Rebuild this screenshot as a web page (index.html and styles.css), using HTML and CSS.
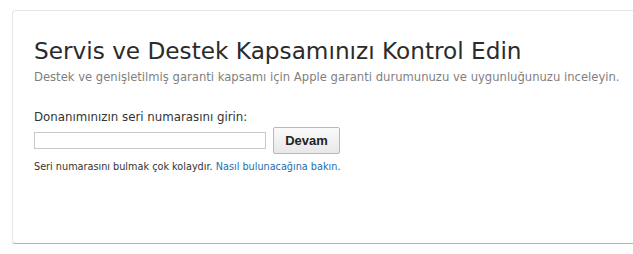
FILE: index.html
```html
<!DOCTYPE html>
<html>
<head>
    <link rel="stylesheet" href="styles.css">
</head>
<body>
    <div class="panel">
        <h1 class="title">Servis ve Destek Kapsamınızı Kontrol Edin</h1>
        <p class="subtitle">Destek ve genişletilmiş garanti kapsamı için Apple garanti durumunuzu ve uygunluğunuzu inceleyin.</p>

        <form class="serial-form" onsubmit="return false;">
            <label class="label" for="serial">Donanımınızın seri numarasını girin:</label>
            <div class="row">
                <input type="text" id="serial" class="field">
                <button type="submit" class="go">Devam</button>
            </div>
            <p class="hint">Seri numarasını bulmak çok kolaydır. <a href="#">Nasıl bulunacağına bakın.</a></p>
        </form>
    </div>
</body>
</html>
```

FILE: styles.css
```css
* {
    margin: 0;
    padding: 0;
    box-sizing: border-box;
}

body {
    background: #fff;
    font-family: "DejaVu Sans", "Lucida Grande", sans-serif;
    padding: 10px 0 0 12px;
    overflow: hidden;
}

.panel {
    width: 640px;
    height: 234px;
    border: 1px solid #e6e6e6;
    border-bottom-color: #b5b5b5;
    border-right: none;
    border-radius: 4px 0 0 4px;
    box-shadow: 0 1px 0 #dcdcdc;
    padding: 25px 0 0 21px;
}

.title {
    font-size: 23.2px;
    font-weight: normal;
    color: #2b2b2b;
    line-height: 30px;
}

.subtitle {
    font-size: 11.6px;
    color: #7f7f7f;
    line-height: 16px;
    margin-top: 3px;
}

.serial-form {
    margin-top: 24px;
}

.label {
    display: block;
    font-size: 11.8px;
    color: #333;
    line-height: 16px;
}

.row {
    display: flex;
    align-items: center;
    gap: 7px;
    margin-top: 2px;
}

.field {
    width: 232px;
    height: 17px;
    border: 1px solid #c8c8c8;
    background: #fff;
}

.go {
    width: 67px;
    height: 27px;
    border: 1px solid #b8b8b8;
    border-radius: 2px;
    background: linear-gradient(#fafafa, #e8e8e8);
    font-family: "Liberation Sans", Arial, sans-serif;
    font-weight: bold;
    font-size: 13px;
    color: #222;
}

.hint {
    font-size: 9.7px;
    color: #333;
    line-height: 14px;
    margin-top: 6px;
}

.hint a {
    color: #1d6eb0;
    text-decoration: none;
}
```
